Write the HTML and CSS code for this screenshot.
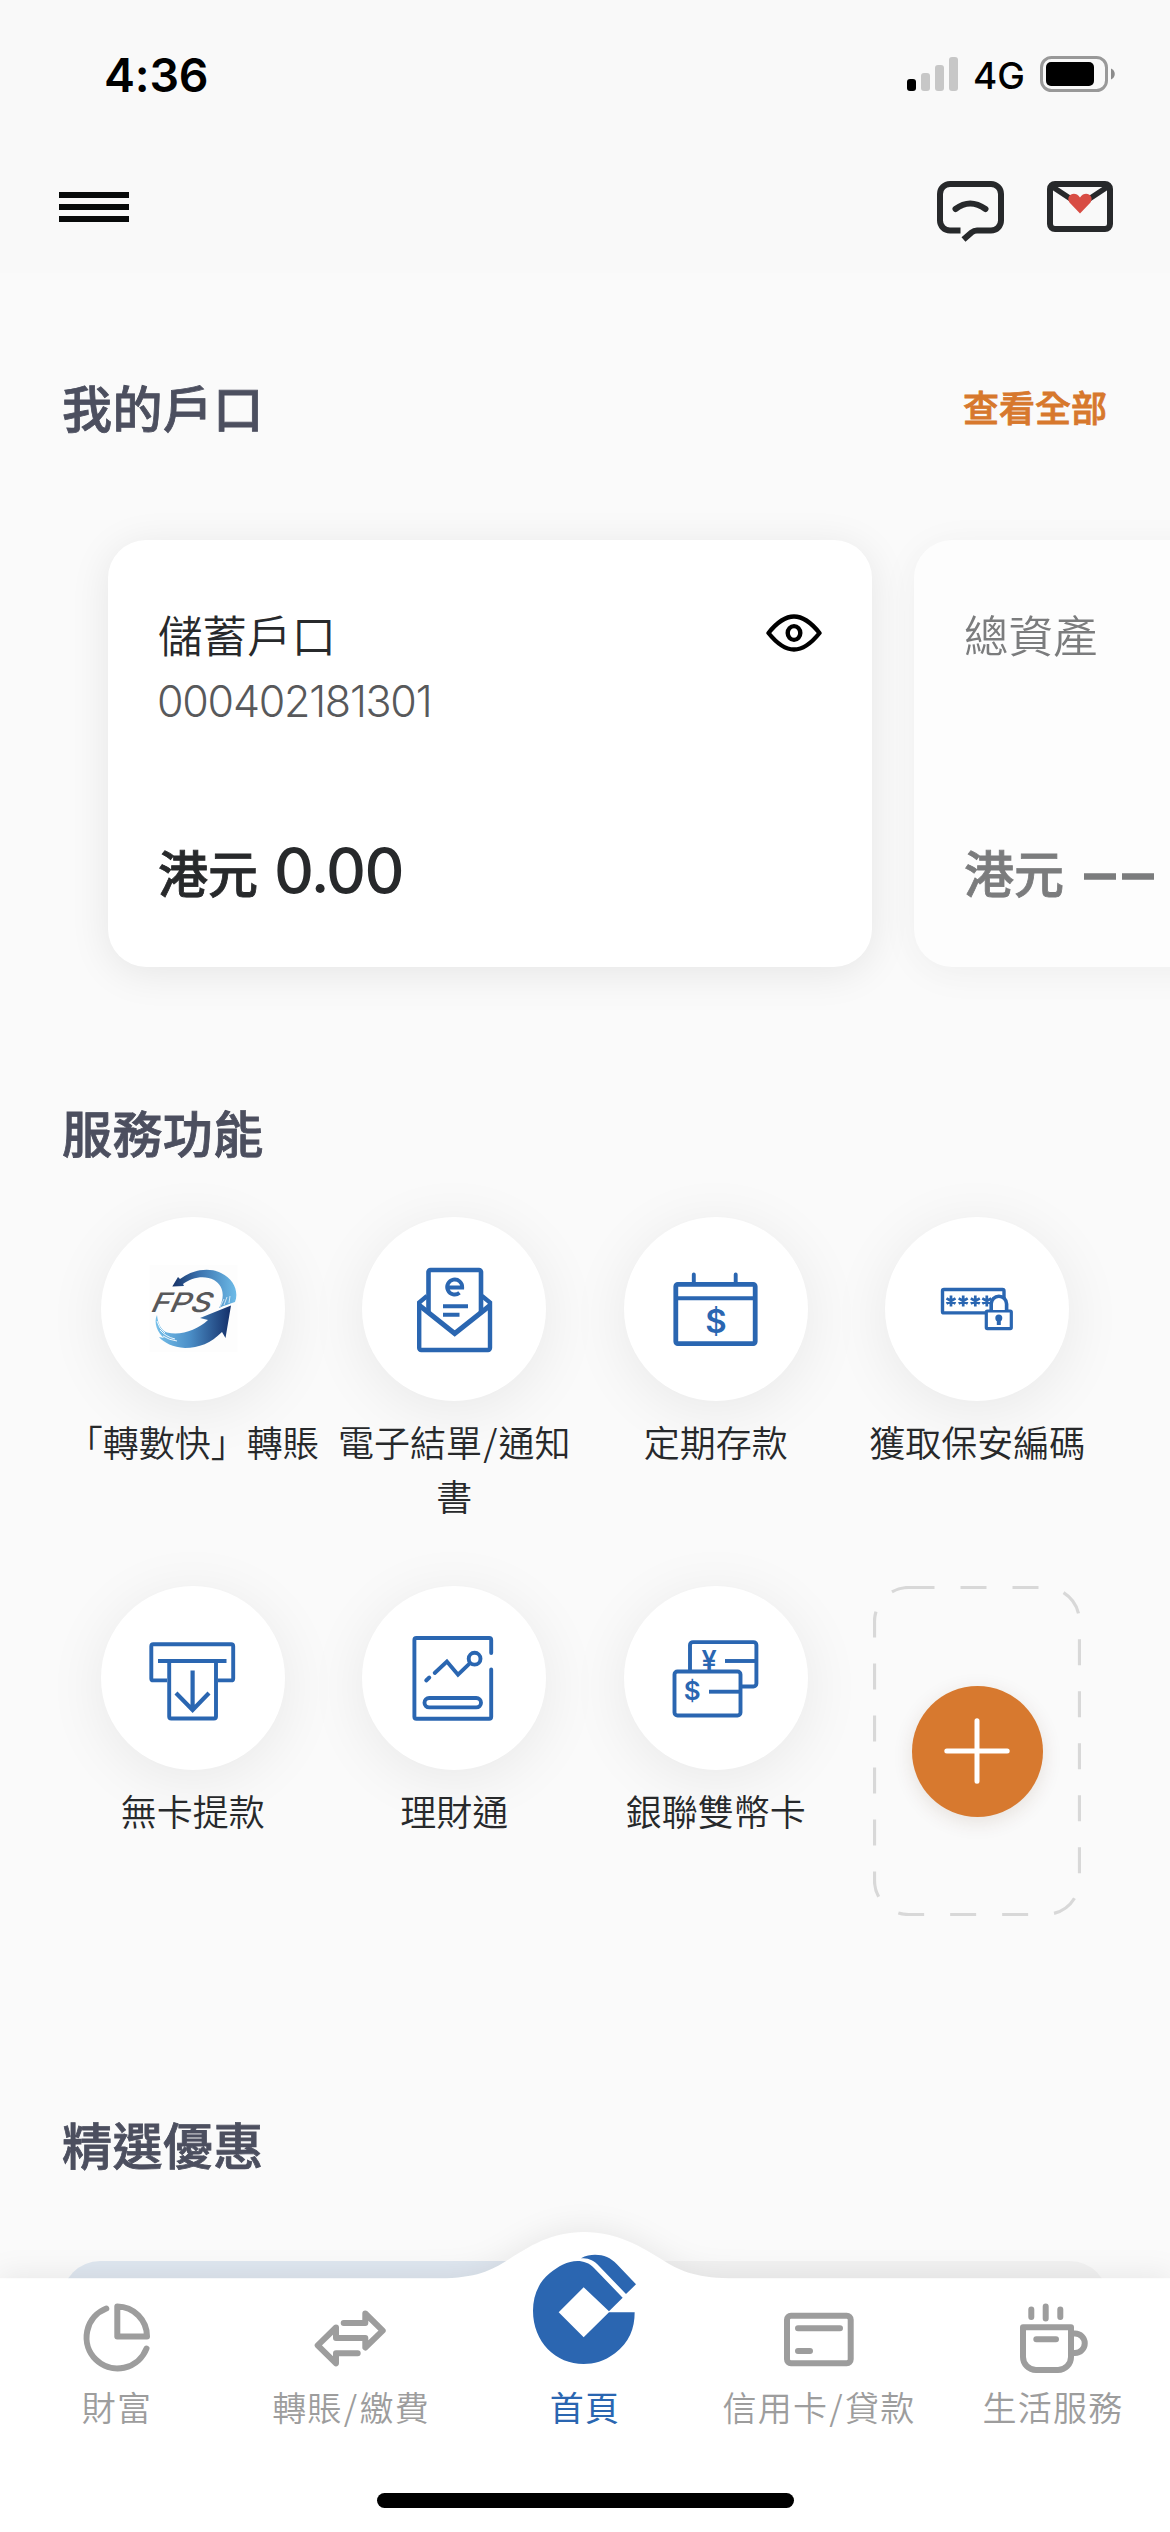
FILE: index.html
```html
<!DOCTYPE html>
<html lang="zh-Hant">
<head>
<meta charset="utf-8">
<title>首頁</title>
<link rel="stylesheet" href="styles.css">
</head>
<body>
<div class="screen">
  <header class="top">
    <div class="status">
      <span class="clock">4:36</span>
      <div class="status-right">
        <svg class="signal" width="51" height="34" viewBox="0 0 51 34">
          <rect x="0" y="22" width="9" height="12" rx="3" fill="#000"/>
          <rect x="14" y="16" width="9" height="18" rx="3" fill="#c7c7c7"/>
          <rect x="28" y="8" width="9" height="26" rx="3" fill="#c7c7c7"/>
          <rect x="42" y="0" width="9" height="34" rx="3" fill="#c7c7c7"/>
        </svg>
        <span class="network">4G</span>
        <svg class="battery" width="75" height="36" viewBox="0 0 75 36">
          <rect x="1.5" y="1.5" width="65" height="33" rx="10" fill="none" stroke="#999" stroke-width="3"/>
          <rect x="6" y="6" width="48" height="24" rx="5" fill="#000"/>
          <path d="M71 12.5c5 2 5 9 0 11z" fill="#8c8c8c"/>
        </svg>
      </div>
    </div>
    <nav class="appbar">
      <svg class="menu" width="70" height="30" viewBox="0 0 70 30"><path d="M0 3h70M0 15h70M0 27h70" stroke="#080a0a" stroke-width="6"/></svg>
      <div class="appbar-actions">
        <svg width="67" height="62" viewBox="0 0 67 62" fill="none" stroke="#27292b" stroke-width="6">
          <path d="M23.5 49.500H13A10 10 0 0 1 3 39.500V13A10 10 0 0 1 13 3H54A10 10 0 0 1 64 13V39.500A10 10 0 0 1 54 49.500H40Q37 49.500 34.500 51.500L26.500 58.500"/>
          <path d="M18.500 28Q33 17 48.500 28" stroke-linecap="round"/>
        </svg>
        <svg width="66" height="62" viewBox="0 0 66 62" fill="none" stroke="#27292b" stroke-width="6">
          <rect x="3" y="3" width="60" height="45" rx="5"/>
          <path d="M5 5.500L33 24L61 5.500" stroke-width="5.500"/>
          <path d="M33 32.500L22.500 21.500C18 15 27.500 8.500 33 16.500C38.500 8.500 48 15 43.500 21.500Z" fill="#d84d44" stroke="none"/>
        </svg>
      </div>
    </nav>
  </header>

  <main>
    <section class="accounts">
      <div class="head"><h2>我的戶口</h2><a class="all">查看全部</a></div>
      <div class="cards">
        <article class="card">
          <div class="card-top">
            <div class="card-name">儲蓄戶口</div>
            <svg width="56" height="38" viewBox="0 0 56 38" fill="none" stroke="#000" stroke-width="4.400" stroke-linejoin="round">
              <path d="M2.500 19C20-3 36-3 53.500 19C36 41 20 41 2.500 19Z"/><ellipse cx="28" cy="19" rx="6.300" ry="6.900"/>
            </svg>
          </div>
          <div class="card-no">000402181301</div>
          <div class="balance"><span>港元</span><b>0.00</b></div>
        </article>
        <article class="card dim">
          <div class="card-top"><div class="card-name">總資產</div></div>
          <div class="card-no"></div>
          <div class="balance"><span>港元</span><svg class="masked" width="70" height="7" viewBox="0 0 70 7"><path d="M0 3.500h32M38 3.500h32" stroke="#27292b" stroke-width="6.500"/></svg></div>
        </article>
      </div>
    </section>

    <section class="services">
      <div class="head"><h2>服務功能</h2></div>
      <div class="grid">
        <div class="service">
          <div class="disc">
            <svg viewBox="0 0 184 184">
              <defs>
                <linearGradient id="up"><stop offset="0" stop-color="#173368"/><stop offset=".4" stop-color="#3a70ac"/><stop offset="1" stop-color="#6dbbe8"/></linearGradient>
                <linearGradient id="down"><stop offset="0" stop-color="#76c0ea"/><stop offset=".45" stop-color="#4b8fc8"/><stop offset="1" stop-color="#142f69"/></linearGradient>
              </defs>
              <rect x="48.500" y="48" width="88" height="87" fill="#fdfdfd"/>
              <path d="M71.300 69.500L77 60L79 62C92 52 109 50 120 56C133 62 138 75 134 85C129 87 124 88 118 91C124 80 123 69 113 63C104 58 91 60 82 67L83 69Z" fill="url(#up)"/>
              <path d="M119 90l4-8M123 88l3-8M128 86l1-7" stroke="#fff" stroke-width=".7"/>
              <path d="M56 98C57 107 60 113 66 115.500C80 119 96 113 107 103L99 101L130 88.500L124.500 121L121 115C110 126 98 131 84 131C72 130 63 126 58 120L63 121C57 116 52 106 56 98Z" fill="url(#down)"/>
              <path d="M56 104q2 8 8 12M59 113q6 7 15 9M62 119q6 4 14 5" fill="none" stroke="#fff" stroke-width=".9"/>
              <text class="fps" transform="translate(49.500 95) skewX(-14)" x="0" y="0" textLength="60" lengthAdjust="spacingAndGlyphs">FPS</text>
            </svg>
          </div>
          <div class="label">「轉數快」轉賬</div>
        </div>
        <div class="service">
          <div class="disc">
            <svg class="line" viewBox="0 0 184 184">
              <path d="M66.500 96V55a2 2 0 0 1 2-2H117a2 2 0 0 1 2 2V96" stroke-width="4.600"/>
              <path d="M65 79L57.200 85.500V131a2 2 0 0 0 2 2H126a2 2 0 0 0 2-2V85.500L120 79" stroke-width="4.400"/>
              <path d="M57.500 88.500L92.700 116.500L128 88.500" stroke-width="5"/>
              <path d="M81 89.200h25M81 97.700h16.500"/>
              <path d="M86 70.500H100.200A7.500 7.500 0 1 0 97.500 75.800" stroke-width="3.900"/>
            </svg>
          </div>
          <div class="label">電子結單<span class="slash">/</span>通知書</div>
        </div>
        <div class="service">
          <div class="disc">
            <svg class="line" viewBox="0 0 184 184">
              <rect x="51.800" y="67.400" width="79.400" height="59.200" rx="2" stroke-width="4.800"/>
              <path d="M51 81.300h81"/>
              <path d="M69.800 57.500v9M111.700 57.500v9" stroke-linecap="round"/>
              <text class="money" x="92" y="115.500" font-size="33">$</text>
            </svg>
          </div>
          <div class="label">定期存款</div>
        </div>
        <div class="service">
          <div class="disc">
            <svg class="line" viewBox="0 0 184 184">
              <path d="M101 95.900H59a1.500 1.500 0 0 1-1.500-1.500V74a1.500 1.500 0 0 1 1.500-1.500H117.500a1.500 1.500 0 0 1 1.500 1.500V82" stroke-width="3.400"/>
              <path stroke-width="2.700" d="M66 78.600v10.800M61.500 81.300l9 5.400M70.500 81.300l-9 5.400M78.200 78.600v10.800M73.700 81.300l9 5.400M82.700 81.300l-9 5.400M90.300 78.600v10.800M85.800 81.300l9 5.400M94.800 81.300l-9 5.400M101.800 78.600v10.800M97.300 81.300l9 5.400M106.300 81.300l-9 5.400"/>
              <rect x="101.300" y="94" width="25" height="17.600" rx="1" fill="#fff" stroke-width="3.200"/>
              <path d="M106.200 93V87a7.700 7.700 0 0 1 15.400 0V93" fill="#fff" stroke-width="3.600"/>
              <circle cx="113.800" cy="101" r="3.500" fill="#2a66b1" stroke="none"/><path d="M113.800 101v7" stroke-width="4"/>
            </svg>
          </div>
          <div class="label">獲取保安編碼</div>
        </div>
        <div class="service">
          <div class="disc">
            <svg class="line" viewBox="0 0 184 184">
              <path d="M66 94.400H52.300a2 2 0 0 1-2-2V60.200a2 2 0 0 1 2-2H130.200a2 2 0 0 1 2 2V92.400a2 2 0 0 1-2 2H117"/>
              <path d="M57 75h68.500M68.200 75V130.500a2 2 0 0 0 2 2H113a2 2 0 0 0 2-2V75"/>
              <path d="M91.600 84.500v38M75 107L91.600 124L108 107" stroke-width="4.200"/>
            </svg>
          </div>
          <div class="label">無卡提款</div>
        </div>
        <div class="service">
          <div class="disc">
            <svg class="line" viewBox="0 0 184 184" stroke-linecap="round">
              <path d="M129.200 67V54a2 2 0 0 0-2-2H54.400a2 2 0 0 0-2 2V130.700a2 2 0 0 0 2 2H127.200a2 2 0 0 0 2-2V83.500"/>
              <path d="M64.200 94.500L67.300 91.500M72.700 87L84.900 75.500L96 88.700L107.500 77.700"/>
              <circle cx="112.600" cy="72.700" r="5.900"/>
              <rect x="62.500" y="112" width="56.500" height="9.400" rx="4.700"/>
            </svg>
          </div>
          <div class="label">理財通</div>
        </div>
        <div class="service">
          <div class="disc">
            <svg class="line" viewBox="0 0 184 184">
              <rect x="66" y="56.100" width="66.400" height="44.400" rx="3"/>
              <text class="money" x="85.200" y="83.500" font-size="27">¥</text>
              <path d="M101 75h32"/>
              <rect x="50.500" y="85.500" width="66" height="44" rx="3" fill="#fff"/>
              <text class="money" x="68.200" y="113.500" font-size="26">$</text>
              <path d="M85 105.700h32"/>
            </svg>
          </div>
          <div class="label">銀聯雙幣卡</div>
        </div>
        <div class="service">
          <div class="add">
            <svg class="outline" width="208" height="330" viewBox="0 0 208 330"><rect x="1.500" y="1.500" width="205" height="327" rx="34" fill="none" stroke="#d8d8d8" stroke-width="3.200" stroke-dasharray="26 26"/></svg>
            <div class="plus"><svg width="66" height="66" viewBox="0 0 66 66"><path d="M33 2.800v60.400M2.800 33h60.400" stroke="#fff" stroke-width="5" stroke-linecap="round"/></svg></div>
          </div>
        </div>
      </div>
    </section>

    <section class="offers">
      <div class="head"><h2>精選優惠</h2></div>
      <div class="banner"></div>
    </section>
  </main>

  <footer class="tabbar">
    <svg class="tabbar-shape" width="1170" height="340" viewBox="0 0 1170 340">
      <path d="M0 86.300H440C476 86.300 492 78 507 68.500C530 54 551 40 584 40C617 40 640 54 665 69.500C682 80 698 86.300 735 86.300H1170V340H0Z" fill="#fff"/>
    </svg>
    <div class="tabs">
      <div class="tab">
        <svg width="74" height="74" viewBox="80 2302 74 74"><path d="M106.300 2309.500A31 31 0 1 0 146.500 2349.500M117.300 2307.500V2337.500H147A30 30 0 0 0 117.300 2307.500Z"/></svg>
        <span>財富</span>
      </div>
      <div class="tab">
        <svg width="74" height="74" viewBox="314 2302 74 74"><path d="M343.700 2324H365.300V2314.500L382.700 2331.700L365.300 2348.500V2339H336V2328.500L317.700 2346.300L336 2364.300V2354.300H357.700"/></svg>
        <span>轉賬<span class="slash">/</span>繳費</span>
      </div>
      <div class="tab active">
        <svg class="logo" width="104" height="112" viewBox="397 166 312 336">
          <path d="M702 341H625L549 416L474 341L549 266L625 338L666 297L580 208C566 193 548 187 531 187C500 187 473 203 447 224C413 251 397 293 397 336C397 430 466 496 549 496C580 496 610 489 643 464C686 431 702 390 702 341Z"/>
          <path d="M541 179C555 170 570 168 583 168C610 168 630 177 648 196L706 257L676 286L590 197C574 182 562 179 541 179Z"/>
        </svg>
        <span>首頁</span>
      </div>
      <div class="tab">
        <svg width="74" height="74" viewBox="781 2302 74 74"><rect x="786" y="2316.700" width="63.700" height="47.600" rx="4"/><path d="M797 2329.300H839M797 2352H809"/></svg>
        <span>信用卡<span class="slash">/</span>貸款</span>
      </div>
      <div class="tab">
        <svg width="74" height="74" viewBox="1015 2302 74 74"><path d="M1022 2328.300H1070V2358A13 13 0 0 1 1057 2371H1035A13 13 0 0 1 1022 2358ZM1070 2334.500H1074A9.700 9.700 0 0 1 1074 2354H1070M1035.300 2340.300H1055M1030.300 2310.500V2318M1044.700 2307.500V2319.500M1059.300 2310.500V2318"/></svg>
        <span>生活服務</span>
      </div>
    </div>
    <div class="home-indicator"></div>
  </footer>
</div>
</body>
</html>
```
FILE: styles.css
```css
* { box-sizing: border-box; }
body { margin: 0; background: #fafafa; font-family: "Noto Sans CJK TC", "Noto Sans", sans-serif; color: #27292b; }
svg { display: block; flex: none; }
.screen { position: relative; width: 1170px; height: 2532px; overflow: hidden; background: #fafafa; }

.top { height: 273px; background: #f9f9f9; }
.status { height: 148px; padding: 0 55px 0 104px; display: flex; align-items: center; justify-content: space-between; font-family: Inter, sans-serif; color: #000; }
.clock { font-size: 46.500px; font-weight: 560; line-height: 60px; padding-top: 1px; letter-spacing: -.2px; }
.status-right { display: flex; align-items: center; }
.network { width: 82px; padding: 3px 0 0 15px; font-size: 37px; font-weight: 500; line-height: 44px; }
.appbar { height: 125px; padding: 33px 57px 0 59px; display: flex; justify-content: space-between; }
.menu { margin-top: 11px; }
.appbar-actions { display: flex; gap: 43px; }

.head { height: 60px; padding: 0 63px 0 62px; display: flex; align-items: center; justify-content: space-between; }
h2 { margin: 0; font-size: 50px; line-height: 60px; font-weight: 500; letter-spacing: .4px; color: #4c4f5f; -webkit-text-stroke: .8px #4c4f5f; }
.all { font-size: 36px; line-height: 60px; font-weight: 500; color: #d7782d; -webkit-text-stroke: .8px #d7782d; }

.accounts { padding-top: 103px; }
.cards { width: 1700px; margin-top: 104px; padding-left: 108px; display: flex; gap: 42px; }
.card { width: 764px; height: 427px; padding: 64px 50px 0; border-radius: 38px; background: #fff; box-shadow: 0 6px 40px rgba(0, 0, 0, .085); }
.dim { opacity: .6; }
.card-top { display: flex; justify-content: space-between; }
.card-top svg { margin-top: 10px; }
.card-name { font-size: 44.500px; line-height: 60px; font-weight: 350; }
.card-no { height: 60px; margin: 7px 0 0 -1px; font-family: Inter, sans-serif; font-size: 43px; line-height: 60px; font-weight: 330; letter-spacing: -1.250px; color: #58595b; }
.balance { height: 80px; margin-top: 99px; display: flex; align-items: center; }
.balance span { width: 116px; padding-top: 2px; font-size: 50px; line-height: 60px; font-weight: 500; -webkit-text-stroke: .8px #27292b; }
.balance b { padding-top: 1px; font-family: Inter, sans-serif; font-size: 62px; line-height: 80px; font-weight: 540; letter-spacing: -1.700px; }
.masked { margin: 12px 0 0 4px; }

.services { padding-top: 134px; }
.grid { margin-top: 56px; padding: 0 62px; display: grid; grid-template-columns: repeat(4, 1fr); grid-auto-rows: 369px; }
.service { display: flex; flex-direction: column; align-items: center; }
.disc { width: 184px; height: 184px; flex: none; border-radius: 50%; background: #fff; box-shadow: 0 9px 60px rgba(0, 0, 0, .075); }
.line { fill: none; stroke: #2a66b1; stroke-width: 3.900px; }
.money { font-family: Inter, sans-serif; font-weight: 600; fill: #2a66b1; stroke: none; text-anchor: middle; }
.fps { font-family: Inter, sans-serif; font-size: 27px; font-weight: 500; font-style: italic; fill: #58585a; }
.label { width: 261px; margin-top: 13px; font-size: 36px; line-height: 54px; font-weight: 350; text-align: center; word-break: break-all; }
.slash { margin: 0 1.200px; }
.add { display: grid; width: 208px; height: 330px; place-items: center; }
.add > * { grid-area: 1 / 1; }
.plus { width: 131px; height: 131px; border-radius: 50%; display: grid; place-items: center; background: #d7792f; box-shadow: 0 5px 20px rgba(80, 40, 0, .12); }

.offers { padding-top: 158px; }
.banner { height: 240px; margin: 88px 62px 0; border-radius: 38px; background: linear-gradient(90deg, #dfe7f0 50%, #f2f2f2 50%); }

.tabbar { position: absolute; left: 0; bottom: 0; width: 1170px; height: 340px; }
.tabbar-shape { position: absolute; inset: 0; filter: drop-shadow(0 -4px 14px rgba(0, 0, 0, .07)); overflow: visible; }
.tabs { position: relative; height: 301px; display: grid; grid-template-columns: repeat(5, 1fr); }
.tab { display: flex; flex-direction: column; align-items: center; justify-content: flex-end; padding-bottom: 61px; color: #9d9d9d; font-size: 34px; line-height: 50px; font-weight: 350; letter-spacing: 1.200px; white-space: nowrap; }
.tab svg { margin-bottom: 7px; fill: none; stroke: #9d9d9d; stroke-width: 6px; stroke-linecap: round; stroke-linejoin: round; }
.active { color: #2a66b1; font-weight: 400; }
.tab .logo { margin-bottom: 16px; fill: #2b66b1; stroke: none; }
.home-indicator { position: relative; width: 417px; height: 15px; margin: 0 auto; border-radius: 8px; background: #000; }
```
